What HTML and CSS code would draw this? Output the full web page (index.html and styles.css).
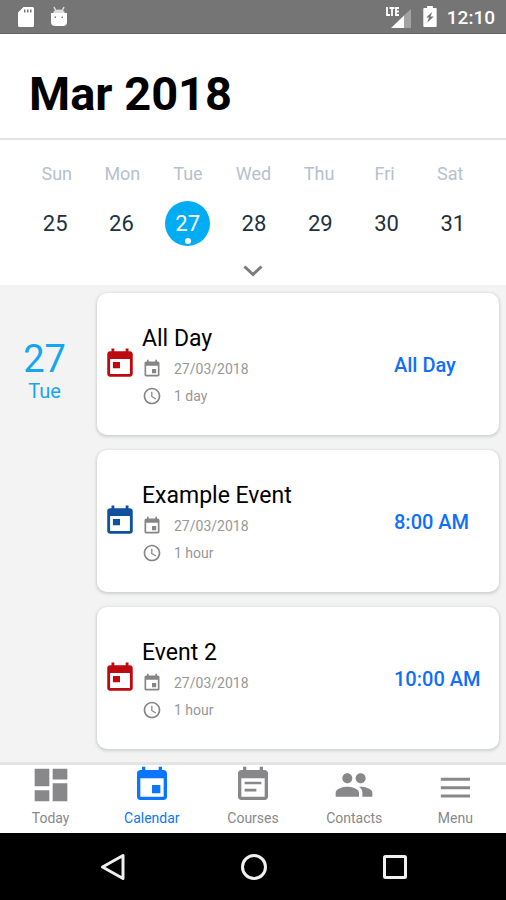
FILE: index.html
```html
<!DOCTYPE html>
<html lang="en">
<head>
<meta charset="utf-8">
<meta name="viewport" content="width=device-width, initial-scale=1">
<title>Calendar</title>
<link rel="stylesheet" href="styles.css">
</head>
<body>
<svg class="sprite" aria-hidden="true">
  <symbol id="today" viewBox="0 0 24 24"><path d="M19 3h-1V1h-2v2H8V1H6v2H5c-1.100 0-2 .9-2 2v14c0 1.100.9 2 2 2h14c1.100 0 2-.9 2-2V5c0-1.100-.9-2-2-2zm0 16H5V8.500h14V19zM7 10.500h5v4.500H7z"/></symbol>
  <symbol id="event" viewBox="0 0 24 24"><path d="M17 12h-5v5h5v-5zM16 1v2H8V1H6v2H5c-1.110 0-1.990.9-1.990 2L3 19c0 1.100.89 2 2 2h14c1.100 0 2-.9 2-2V5c0-1.100-.9-2-2-2h-1V1h-2zm3 18H5V8h14v11z"/></symbol>
  <symbol id="note" viewBox="0 0 24 24"><path d="M17 10H7v1.600h10V10zm2-7h-1V1h-2v2H8V1H6v2H5c-1.110 0-1.990.9-1.990 2L3 19c0 1.100.89 2 2 2h14c1.100 0 2-.9 2-2V5c0-1.100-.9-2-2-2zm0 16H5V8h14v11zm-5-4.700H7v1.600h7v-1.600z"/></symbol>
  <symbol id="clock" viewBox="0 0 24 24"><path d="M12 2C6.500 2 2 6.500 2 12s4.500 10 10 10 10-4.500 10-10S17.500 2 12 2zm0 18c-4.400 0-8-3.600-8-8s3.600-8 8-8 8 3.600 8 8-3.600 8-8 8zm.5-13H11v6l5.200 3.200.8-1.300-4.500-2.700z"/></symbol>
</svg>

<header class="status">
  <div class="status-group">
    <svg class="sd" viewBox="0 0 16 20" aria-label="SD card"><path fill="#fff" fill-rule="evenodd" d="M5.500 0H14.500Q16 0 16 1.500V18.500Q16 20 14.500 20H1.500Q0 20 0 18.500V5.500zM6 2.500v3h1.500v-3zm3 0v3h1.500v-3zm3 0v3h1.500v-3z"/></svg>
    <svg class="droid" viewBox="0 0 18 22" aria-label="Debugging"><path d="M4 1l2 4M14 1l-2 4" stroke="#ddd" stroke-width="1.500"/><path fill="#ddd" d="M3 8q0-4.500 6-4.500T15 8z"/><path fill="#fff" fill-rule="evenodd" d="M1 7h16v9q0 4-4 4H5q-4 0-4-4zM4.500 10.500v1.500H6v-1.500zm7 0v1.500H13v-1.500z"/></svg>
  </div>
  <div class="status-group">
    <svg class="signal" viewBox="0 0 28 22" aria-label="LTE signal"><path d="M2 1v8h3M4.500 2h5M7 2v8M14 2h-3v7h3M11 5.500h3" fill="none" stroke="#fff" stroke-width="1.800"/><path fill="#fff" d="M6 22L19 9.500V22z"/><path fill="#a3a3a3" d="M19 9.500L26 3v19h-7z"/></svg>
    <svg class="battery" viewBox="0 0 14 22" aria-label="Battery charging"><path fill="#fff" d="M4 0h6v2h3q1 0 1 1v18q0 1-1 1H1q-1 0-1-1V3q0-1 1-1h3z"/><path fill="#757575" d="M9.500 6L3 12h3l-2 5.500L11 11H7.500z"/></svg>
    <time class="clock-text">12:10</time>
  </div>
</header>

<main class="screen">
  <div class="title-bar"><h1>Mar 2018</h1></div>

  <section class="week" aria-label="Week">
    <div class="weekdays"><span>Sun</span><span>Mon</span><span>Tue</span><span>Wed</span><span>Thu</span><span>Fri</span><span>Sat</span></div>
    <div class="dates">
      <button>25</button><button>26</button><button class="selected" aria-current="date">27</button><button>28</button><button>29</button><button>30</button><button>31</button>
    </div>
    <button class="expand" aria-label="Show month"><svg viewBox="0 0 20 12"><path d="M1.500 1.500L10 9.500l8.500-8" fill="none" stroke="#7b7b7b" stroke-width="3"/></svg></button>
  </section>

  <section class="agenda">
    <div class="day"><span class="day-number">27</span><span class="day-name">Tue</span></div>
    <div class="events">
      <article class="card">
        <svg class="kind red" aria-hidden="true"><use href="#today"/></svg>
        <div class="info">
          <h2>All Day</h2>
          <p><svg><use href="#event"/></svg>27/03/2018</p>
          <p><svg><use href="#clock"/></svg>1 day</p>
        </div>
        <strong class="when">All Day</strong>
      </article>
      <article class="card">
        <svg class="kind blue" aria-hidden="true"><use href="#today"/></svg>
        <div class="info">
          <h2>Example Event</h2>
          <p><svg><use href="#event"/></svg>27/03/2018</p>
          <p><svg><use href="#clock"/></svg>1 hour</p>
        </div>
        <strong class="when">8:00 AM</strong>
      </article>
      <article class="card">
        <svg class="kind red" aria-hidden="true"><use href="#today"/></svg>
        <div class="info">
          <h2>Event 2</h2>
          <p><svg><use href="#event"/></svg>27/03/2018</p>
          <p><svg><use href="#clock"/></svg>1 hour</p>
        </div>
        <strong class="when">10:00 AM</strong>
      </article>
    </div>
  </section>
</main>

<nav class="tabs" aria-label="Sections">
  <a href="#"><svg viewBox="0 0 24 24"><path d="M2.200 2.200h8.800v10.600H2.200zM13 2.200h8.800v6.500H13zM2.200 15.200h8.800v6.600H2.200zM13 11h8.800v10.800H13z"/></svg>Today</a>
  <a href="#" class="active" aria-current="page"><svg><use href="#event"/></svg>Calendar</a>
  <a href="#"><svg><use href="#note"/></svg>Courses</a>
  <a href="#"><svg viewBox="0 0 24 24"><path d="M16 11c1.660 0 2.990-1.340 2.990-3S17.660 5 16 5s-3 1.340-3 3 1.340 3 3 3zm-8 0c1.660 0 2.990-1.340 2.990-3S9.660 5 8 5 5 6.340 5 8s1.340 3 3 3zm0 2c-2.330 0-7 1.170-7 3.500V19h14v-2.500C15 14.170 10.330 13 8 13zm8 0c-.29 0-.62.02-.97.05 1.160.84 1.970 1.970 1.970 3.450V19h6v-2.500c0-2.330-4.670-3.500-7-3.500z"/></svg>Contacts</a>
  <a href="#"><svg viewBox="0 0 24 24"><path d="M3.500 7.700H21v1.800H3.500zM3.500 12.700H21v1.800H3.500zM3.500 17.700H21v1.800H3.500z"/></svg>Menu</a>
</nav>

<footer class="system">
  <button aria-label="Back"><svg viewBox="0 0 28 28"><path d="M24 2.500v23L3.500 14z"/></svg></button>
  <button aria-label="Home"><svg viewBox="0 0 28 28"><circle cx="14" cy="14" r="11.500"/></svg></button>
  <button aria-label="Recent apps"><svg viewBox="0 0 28 28"><rect x="3.500" y="3.500" width="21" height="21" rx="1"/></svg></button>
</footer>
</body>
</html>
```
FILE: styles.css
```css
* {
  box-sizing: border-box;
}

body {
  margin: 0;
  min-height: 100vh;
  display: flex;
  flex-direction: column;
  background: #fff;
  color: #000;
  font-family: Roboto, "Liberation Sans", sans-serif;
}

h1,
h2,
p {
  margin: 0;
}

button {
  padding: 0;
  border: 0;
  background: none;
  font: inherit;
  color: inherit;
}

svg {
  display: block;
  fill: currentColor;
}

.sprite {
  display: none;
}

/* Status bar */
.status {
  display: flex;
  justify-content: space-between;
  height: 34px;
  padding: 0 11px 0 18px;
  background: #757575;
  border-bottom: 1px solid #616161;
  color: #fff;
}

.status-group {
  display: flex;
  align-items: center;
}

.sd {
  width: 16px;
  height: 20px;
  margin-right: 16px;
}

.droid {
  width: 18px;
  height: 22px;
}

.signal {
  width: 28px;
  height: 22px;
  margin-right: 10px;
}

.battery {
  width: 14px;
  height: 21px;
  margin-right: 10px;
}

.clock-text {
  padding-top: 2px;
  font-size: 19px;
  font-weight: 500;
}

/* Header and week strip */
.screen {
  flex: 1;
  display: flex;
  flex-direction: column;
}

.title-bar {
  padding: 32px 29px 16px;
  border-bottom: 2px solid #e2e4e5;
}

h1 {
  font-size: 47px;
  line-height: 56px;
  font-weight: 700;
}

.week {
  padding: 22px 0 8px;
}

.weekdays,
.dates {
  display: grid;
  grid-template-columns: repeat(7, 1fr);
  text-align: center;
}

.weekdays {
  padding: 0 23px 0 24px;
  font-size: 18px;
  line-height: 24px;
  color: #b6c1cd;
}

.dates {
  padding: 0 20px 0 22px;
  margin-top: 15px;
  justify-items: center;
  font-size: 22px;
  color: #22303f;
}

.dates button {
  position: relative;
  width: 45px;
  height: 45px;
  border-radius: 50%;
}

.dates .selected {
  background: #00adf5;
  color: #fff;
}

.selected::after {
  content: "";
  position: absolute;
  left: 20px;
  bottom: 2px;
  width: 6px;
  height: 6px;
  border-radius: 50%;
  background: #fff;
}

.expand {
  display: block;
  margin: 19px auto 0;
}

.expand svg {
  width: 20px;
  height: 12px;
}

/* Agenda */
.agenda {
  flex: 1;
  display: flex;
  padding: 8px 7px 12px 0;
  background: #f3f3f3;
}

.day {
  width: 97px;
  padding: 45px 8px 0 0;
  display: flex;
  flex-direction: column;
  align-items: center;
  color: #15a6f0;
}

.day-number {
  font-size: 38px;
  line-height: 42px;
}

.day-name {
  font-size: 20px;
  line-height: 22px;
}

.events {
  flex: 1;
  display: flex;
  flex-direction: column;
  gap: 15px;
}

.card {
  display: flex;
  height: 142px;
  padding: 32px 0 0 6px;
  border-radius: 10px;
  background: #fff;
  box-shadow: 0 1px 3px 1px #cfd1d1;
}

.kind {
  width: 34px;
  height: 34px;
  margin: 22px 4px 0 0;
}

.red {
  color: #bd0a10;
}

.blue {
  color: #114f9f;
}

.info {
  flex: 1;
}

h2 {
  padding-left: 1px;
  font-size: 23px;
  line-height: 28px;
  font-weight: 400;
}

.info p {
  display: flex;
  align-items: center;
  gap: 12px;
  height: 27px;
  padding: 5px 0 0 1px;
  font-size: 14px;
  line-height: 20px;
  color: #979797;
}

.info p svg {
  width: 20px;
  height: 20px;
  color: #858585;
}

.when {
  width: 105px;
  padding-top: 28px;
  font-size: 20px;
  line-height: 24px;
  font-weight: 500;
  color: #0f6ffb;
}

/* Tab bar */
.tabs {
  display: flex;
  height: 71px;
  border-top: 3px solid #e4e4e4;
}

.tabs a {
  flex: 1;
  display: flex;
  flex-direction: column;
  align-items: center;
  font-size: 14px;
  line-height: 16px;
  color: #88888a;
  text-decoration: none;
}

.tabs .active {
  color: #0a76ff;
}

.tabs svg {
  width: 40px;
  height: 40px;
  margin-bottom: 5px;
}

/* System navigation */
.system {
  display: flex;
  justify-content: space-around;
  height: 67px;
  padding: 0 41px 0 42px;
  background: #000;
}

.system svg {
  width: 28px;
  height: 28px;
  fill: none;
  stroke: #f0f0f0;
  stroke-width: 3;
  stroke-linejoin: round;
}
```
